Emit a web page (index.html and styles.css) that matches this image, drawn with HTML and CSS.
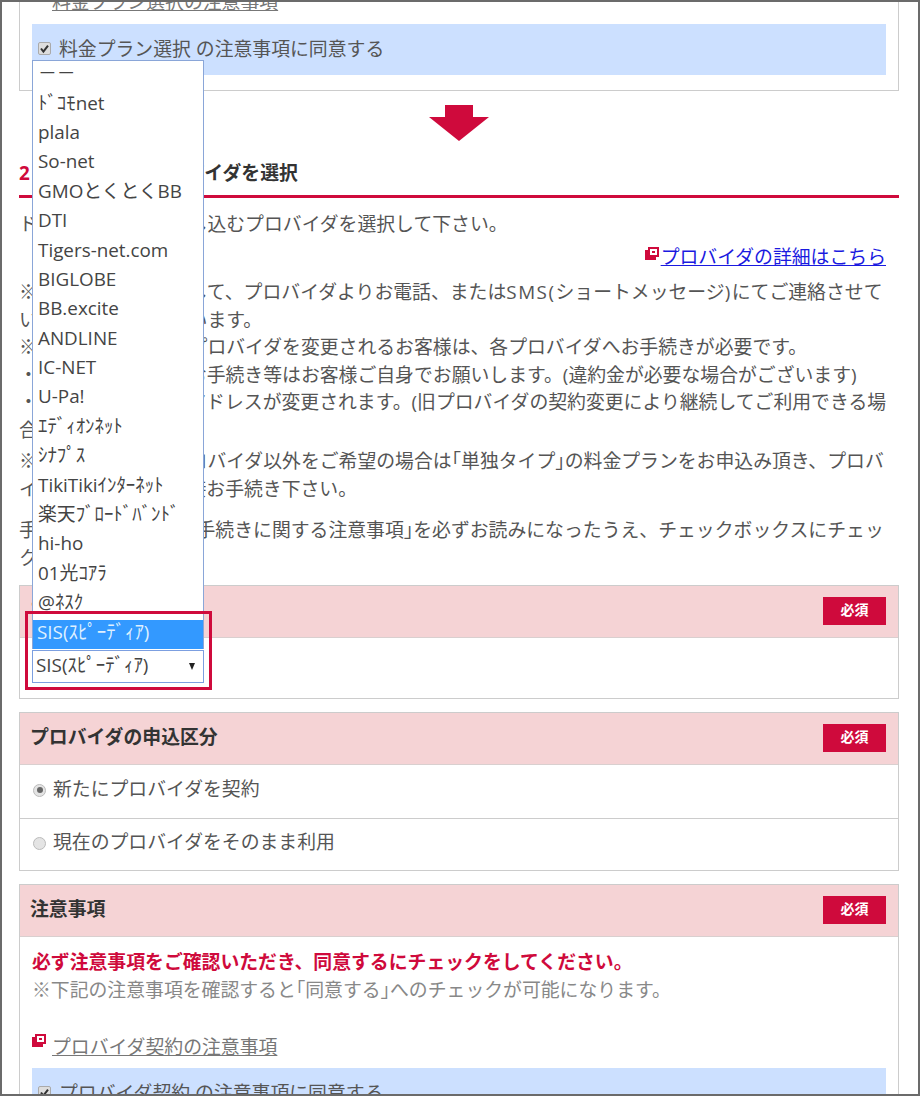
FILE: index.html
```html
<!DOCTYPE html>
<html lang="ja">
<head>
<meta charset="utf-8">
<title>プロバイダを選択</title>
<link rel="stylesheet" href="styles.css">
</head>
<body>
<div class="frame">
  <section class="panel">
    <div class="doc-line"><a class="muted-link" href="#">料金プラン選択の注意事項</a></div>
    <label class="agree">
      <span class="check"><svg viewBox="0 0 13 13" width="13" height="13"><path d="M3 6.5 5.4 9.6 10 3.6" fill="none" stroke="#333" stroke-width="2"/></svg></span>
      <span>料金プラン選択 の注意事項に同意する</span>
    </label>
  </section>

  <div class="arrow"><svg viewBox="0 0 60 36" width="60" height="36"><path d="M16 0H44V12H60L30 36 0 12H16Z" fill="#cf0a3c"/></svg></div>

  <h2 class="step"><span class="step-no">2</span>ご利用になるプロバイダを選択</h2>

  <p class="lead">ドコモ光と一緒に申し込むプロバイダを選択して下さい。</p>
  <div class="detail-line">
    <svg class="ext" viewBox="0 0 14 14" width="14" height="14"><path d="M3 0H14V10H11V13H0V3H3Z" fill="#cf0a3c"/><path d="M5 2H12V8H5Z" fill="#fff"/><path d="M7 4H10V6H7Z" fill="#cf0a3c"/></svg>
    <a class="blue-link" href="#">プロバイダの詳細はこちら</a>
  </div>

  <p class="notes">※お申込みにつきまして、プロバイダよりお電話、または<span class="latin">SMS(</span>ショートメッセージ<span class="latin">)</span>にてご連絡させて<br>いただく場合がございます。<br>※現在、ご利用中のプロバイダを変更されるお客様は、各プロバイダへお手続きが必要です。<br><span class="dot">・</span>プロバイダの解約お手続き等はお客様ご自身でお願いします。(違約金が必要な場合がございます)<br><span class="dot">・</span>プロバイダメールアドレスが変更されます。(旧プロバイダの契約変更により継続してご利用できる場<br>合がございます。)</p>
  <p class="notes tight">※上記一覧記載のプロバイダ以外をご希望の場合は<span class="bracket">「</span>単独タイプ<span class="bracket">」</span>の料金プランをお申込み頂き、プロバ<br>イダのサイトより直接お手続き下さい。</p>
  <p class="notes wide">手順に沿ってお申込<span class="bracket">「</span>手続きに関する注意事項<span class="bracket">」</span>を必ずお読みになったうえ、チェックボックスにチェッ<br>クを入れて下さい。</p>

  <section class="box">
    <header class="box-head"><h3>プロバイダ</h3><span class="req">必須</span></header>
    <div class="box-row select-row">
      <div class="select-wrap">
        <ul class="options">
          <li>－－</li><li>ﾄﾞｺﾓnet</li><li>plala</li><li>So-net</li><li>GMOとくとくBB</li><li>DTI</li><li>Tigers-net.com</li><li>BIGLOBE</li><li>BB.excite</li><li>ANDLINE</li><li>IC-NET</li><li>U-Pa!</li><li>ｴﾃﾞｨｵﾝﾈｯﾄ</li><li>ｼﾅﾌﾟｽ</li><li>TikiTikiｲﾝﾀｰﾈｯﾄ</li><li>楽天ﾌﾞﾛｰﾄﾞﾊﾞﾝﾄﾞ</li><li>hi-ho</li><li>01光ｺｱﾗ</li><li>@ﾈｽｸ</li><li class="selected">SIS(ｽﾋﾟｰﾃﾞｨｱ)</li>
        </ul>
        <div class="select-box"><span>SIS(ｽﾋﾟｰﾃﾞｨｱ)</span><span class="caret"></span></div>
        <div class="highlight"></div>
      </div>
    </div>
  </section>

  <section class="box">
    <header class="box-head"><h3>プロバイダの申込区分</h3><span class="req">必須</span></header>
    <div class="box-row radio-row"><span class="radio on"></span><span class="radio-text">新たにプロバイダを契約</span></div>
    <div class="box-row radio-row"><span class="radio"></span><span class="radio-text">現在のプロバイダをそのまま利用</span></div>
  </section>

  <section class="box">
    <header class="box-head"><h3>注意事項</h3><span class="req">必須</span></header>
    <div class="box-body">
      <p class="warn">必ず注意事項をご確認いただき、同意するにチェックをしてください。</p>
      <p class="hint">※下記の注意事項を確認すると<span class="bracket">「</span>同意する<span class="bracket">」</span>へのチェックが可能になります。</p>
      <div class="doc-line doc-line-body">
        <svg class="ext" viewBox="0 0 14 14" width="14" height="14"><path d="M3 0H14V10H11V13H0V3H3Z" fill="#cf0a3c"/><path d="M5 2H12V8H5Z" fill="#fff"/><path d="M7 4H10V6H7Z" fill="#cf0a3c"/></svg>
        <a class="muted-link" href="#">プロバイダ契約の注意事項</a>
      </div>
      <label class="agree">
        <span class="check"><svg viewBox="0 0 13 13" width="13" height="13"><path d="M3 6.5 5.4 9.6 10 3.6" fill="none" stroke="#333" stroke-width="2"/></svg></span>
        <span>プロバイダ契約 の注意事項に同意する</span>
      </label>
    </div>
  </section>
</div>
</body>
</html>
```
FILE: styles.css
```css
* { box-sizing: border-box; }
html, body { margin: 0; padding: 0; }
body {
  font-family: "Open Sans", "Noto Sans CJK JP", sans-serif;
  font-size: 18.85px;
  line-height: 27.5px;
  color: #555;
  background: #fff;
}
p, h2, h3, ul { margin: 0; padding: 0; }

.frame {
  width: 920px;
  height: 1096px;
  overflow: hidden;
  border: 2px solid #6b6b6b;
  padding: 0 19px 0 17px;
  background: #fff;
}

.panel {
  margin-top: -40px;
  padding: 26px 12px 15px;
  border: 1px solid #ccc;
}
.doc-line { height: 27px; padding-left: 20px; white-space: nowrap; }
.muted-link { color: #777; text-decoration: underline; }
.agree {
  display: flex;
  align-items: center;
  gap: 8px;
  height: 51px;
  margin-top: 8px;
  padding-left: 6px;
  background: #cce0ff;
  white-space: nowrap;
}
.check {
  display: flex;
  width: 13px;
  height: 13px;
  margin-bottom: 2px;
  border: 1px solid #aaa;
  border-radius: 2px;
  background: #ddd;
}
.check svg { flex: none; margin: -1px; }

.arrow { display: flex; justify-content: center; height: 36px; margin: 14px 0 0; }
.arrow svg { display: block; }

.step {
  margin-top: 18px;
  height: 39px;
  padding-bottom: 7px;
  border-bottom: 3px solid #cf0a3c;
  font-size: 18.85px;
  line-height: 29px;
  font-weight: 700;
  color: #333;
  white-space: nowrap;
}
.step-no { color: #cf0a3c; margin-right: 5px; }

.lead { margin-top: 13px; white-space: nowrap; }
.detail-line {
  display: flex;
  justify-content: flex-end;
  align-items: flex-start;
  gap: 2px;
  margin-top: 5px;
  padding-right: 13px;
  white-space: nowrap;
}
.ext { flex: none; }
.detail-line .ext { margin-top: 3px; }
.blue-link { color: #1a1ae0; text-decoration: underline; }

.notes { margin-top: 8px; white-space: nowrap; }
.notes.tight { margin-top: 4px; }
.notes.wide { margin-top: 14px; }
.bracket { font-feature-settings: "halt"; }
.latin { letter-spacing: 1.5px; }

.box { margin-top: 13px; border: 1px solid #ccc; }
.box-head {
  display: flex;
  align-items: center;
  justify-content: space-between;
  height: 52px;
  padding: 0 12px 0 10px;
  background: #f5d3d5;
  border-bottom: 1px solid #d9cfcf;
}
.box-head h3 { font-size: 18.85px; font-weight: 700; color: #333; padding-bottom: 1px; }
.req {
  display: flex;
  align-items: center;
  justify-content: center;
  width: 63px;
  height: 28px;
  margin-bottom: 2px;
  background: #cf0a3c;
  color: #fff;
  font-family: "Liberation Serif", "Noto Sans CJK JP", serif;
  font-size: 14px;
  font-weight: 700;
}

.box-row { height: 53px; }
.box-row + .box-row { height: 52px; border-top: 1px solid #ccc; }
.select-row { height: 60px; padding: 12px 0 0 12px; }
.select-wrap { position: relative; width: 172px; }
.select-box {
  display: flex;
  align-items: center;
  justify-content: space-between;
  height: 33px;
  padding: 0 8px 2px 3px;
  border: 1px solid #7c9fe0;
  background: #fff;
  color: #444;
  white-space: nowrap;
}
.caret {
  width: 0;
  height: 0;
  margin-top: 2px;
  border-left: 3.5px solid transparent;
  border-right: 3.5px solid transparent;
  border-top: 7px solid #222;
}
.options {
  position: absolute;
  left: 0;
  right: 0;
  bottom: 100%;
  margin-bottom: 1px;
  list-style: none;
  background: #fff;
  border: 1px solid #8aa6d8;
  border-bottom: 0;
}
.options li {
  height: 29.4px;
  line-height: 25px;
  padding-left: 5px;
  color: #444;
  white-space: nowrap;
}
.options .selected { padding-left: 4px; background: #3399ff; color: #dff0ff; }
.highlight {
  position: absolute;
  left: -7px;
  top: -39px;
  width: 187px;
  height: 79px;
  border: 3px solid #cf0a3c;
  pointer-events: none;
}

.radio-row { display: flex; align-items: center; gap: 7px; padding-left: 13px; white-space: nowrap; }
.radio-text { padding-bottom: 4px; }
.radio {
  position: relative;
  width: 13px;
  height: 13px;
  margin-bottom: 3px;
  border: 1px solid #bbb;
  border-radius: 50%;
  background: #e4e4e4;
}
.radio.on::after {
  content: "";
  position: absolute;
  left: 2.5px;
  top: 2.5px;
  width: 6px;
  height: 6px;
  border-radius: 50%;
  background: #666;
}

.box-body { padding: 12px 12px 0; }
.warn { color: #cf0a3c; font-weight: 700; white-space: nowrap; }
.hint { color: #888; white-space: nowrap; }
.doc-line-body { display: flex; gap: 6px; align-items: flex-start; height: 27px; margin-top: 30px; padding-left: 0; }
.doc-line-body .ext { margin-top: 0; }
.doc-line-body + .agree { margin-top: 7px; }
```
